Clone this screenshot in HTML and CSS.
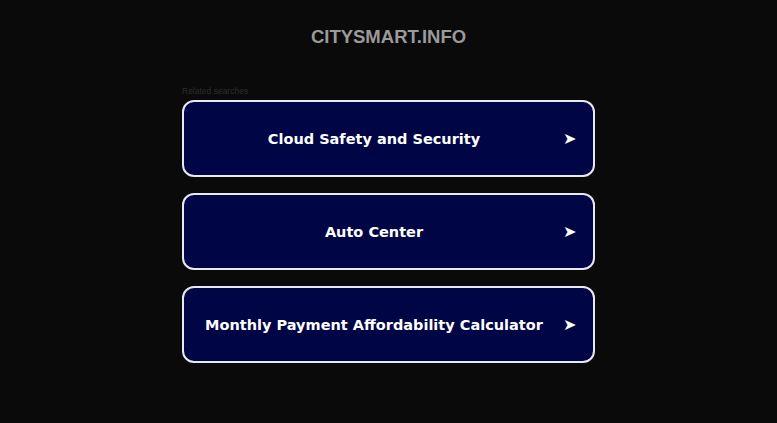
FILE: index.html
```html
<!DOCTYPE html>
<html lang="en">
<head>
    <meta charset="UTF-8">
    <meta name="viewport" content="width=device-width, initial-scale=1.0">
    <title>citysmart.info</title>
    <link rel="stylesheet" href="styles.css">
</head>
<body>

    <!-- Domain Header -->
    <header class="site-header">
        <h1 class="domain">citysmart.info</h1>
    </header>

    <!-- Related Search Links -->
    <main class="related">
        <p class="related-title">Related searches</p>
        <a class="search-link" href="#">
            <span class="link-text">Cloud Safety and Security</span>
            <span class="link-arrow">&#x27A4;</span>
        </a>
        <a class="search-link" href="#">
            <span class="link-text">Auto Center</span>
            <span class="link-arrow">&#x27A4;</span>
        </a>
        <a class="search-link" href="#">
            <span class="link-text">Monthly Payment Affordability Calculator</span>
            <span class="link-arrow">&#x27A4;</span>
        </a>
    </main>

</body>
</html>
```

FILE: styles.css
```css
/* Page layout */
body, html {
    margin: 0;
    padding: 0;
    background-color: #0a0a0a;
    font-family: "Liberation Sans", Arial, sans-serif;
}

/* Domain name at the top */
.site-header {
    padding-top: 25px;
    text-align: center;
}

.domain {
    margin: 0;
    font-size: 18.5px;
    line-height: 24px;
    font-weight: bold;
    text-transform: uppercase;
    color: #9a9a9a;
}

/* Related searches block */
.related {
    width: 413px;
    margin: 37px auto 0;
    display: flex;
    flex-direction: column;
    gap: 16px;
}

.related-title {
    margin: 0 0 -12px;
    font-size: 8.5px;
    line-height: 10px;
    color: #2e2e2e;
}

/* Each search button */
.search-link {
    display: flex;
    align-items: center;
    height: 77px;
    box-sizing: border-box;
    border: 2px solid #e8e8f0;
    border-radius: 12px;
    background-color: #000545;
    color: #fff;
    text-decoration: none;
    font-family: "DejaVu Sans", sans-serif;
    font-weight: bold;
    font-size: 14.5px;
}

.link-text {
    flex: 1;
    text-align: center;
    padding-left: 1px;
}

.link-arrow {
    width: 12px;
    margin-right: 18px;
    font-size: 16px;
    text-align: center;
}
```
